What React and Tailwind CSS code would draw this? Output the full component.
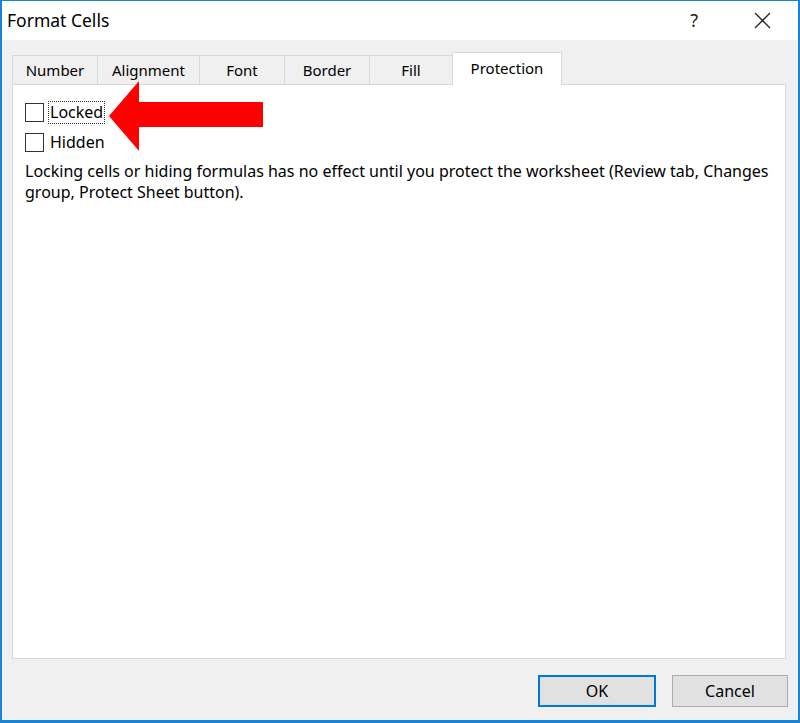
import React from 'react';

const tabs = ['Number', 'Alignment', 'Font', 'Border', 'Fill', 'Protection'];
const tabWidths = ['w-[85px]', 'w-[102px]', 'w-[85px]', 'w-[85px]', 'w-[83px]', 'w-[110px]'];

const Checkbox = ({ label, focused }) => (
  <div className="flex items-center h-[30px]">
    <div className="w-[19px] h-[19px] border border-[#333333] bg-white" />
    <span className={`ml-[5px] px-[1px] leading-[21px] ${focused ? 'outline outline-1 outline-dotted outline-[#333]' : ''}`}>
      {label}
    </span>
  </div>
);

const App = () => {
  return (
    <div className="w-[800px] h-[723px] flex flex-col border-x-2 border-b-[3px] border-t border-[#1883d7] bg-[#f0f0f0] text-[#000] overflow-hidden" style={{ fontFamily: '"Noto Sans", "Open Sans", sans-serif' }}>
      {/* title bar */}
      <div className="h-[39px] bg-white flex items-center shrink-0">
        <span className="ml-[5px] text-[17.5px] text-black">Format Cells</span>
        <span className="ml-auto text-[18px] text-[#222]">?</span>
        <svg className="ml-[56px] mr-[27px]" width="17" height="17" viewBox="0 0 17 17">
          <path d="M1 1 L16 16 M16 1 L1 16" stroke="#222" strokeWidth="1.3" fill="none" />
        </svg>
      </div>

      {/* body */}
      <div className="flex-1 flex flex-col px-[10px] pt-[12px]">
        <div className="flex items-end h-[32px] text-[15px]">
          {tabs.map((t, i) =>
            t === 'Protection' ? (
              <div key={t} className={`${tabWidths[i]} h-[33px] -mb-px relative z-10 bg-white border border-b-0 border-[#d9d9d9] flex items-center justify-center pb-[2px]`}>
                {t}
              </div>
            ) : (
              <div key={t} className={`${tabWidths[i]} h-[29px] border-t border-l border-[#d9d9d9] ${i === 4 ? 'border-r-0' : ''} flex items-center justify-center`}>
                {t}
              </div>
            )
          )}
        </div>

        <div className="relative h-[575px] w-[774px] bg-white border border-[#d9d9d9] px-[12px] pt-[12px] text-[16px]">
          <Checkbox label="Locked" focused />
          <Checkbox label="Hidden" />
          <p className="mt-[4px] leading-[21px] pr-[4px]">
            Locking cells or hiding formulas has no effect until you protect the worksheet (Review tab, Changes group, Protect Sheet button).
          </p>

          {/* red arrow annotation */}
          <svg className="absolute left-[94px] top-[-4px]" width="158" height="70" viewBox="0 0 158 70">
            <polygon points="2,35 32,0 32,21 156,21 156,46 32,46 32,70" fill="#ff0000" />
          </svg>
        </div>

        <div className="flex justify-end mt-[16px] gap-[16px]">
          <button className="w-[118px] h-[32px] bg-[#e1e1e1] border-2 border-[#0078d7] text-[16px]">OK</button>
          <button className="w-[116px] h-[32px] bg-[#e1e1e1] border border-[#adadad] text-[16px]">Cancel</button>
        </div>
      </div>
    </div>
  );
};

export default App;
